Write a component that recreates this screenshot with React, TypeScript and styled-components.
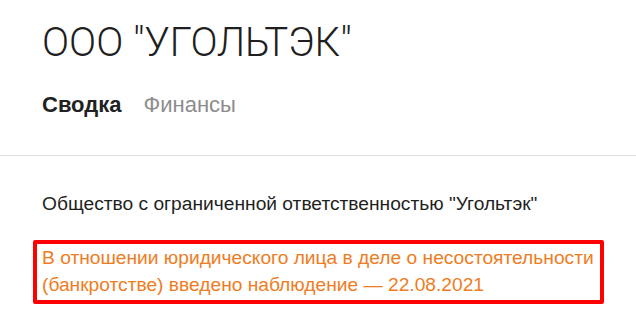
import styled, { createGlobalStyle } from 'styled-components';

const GlobalStyle = createGlobalStyle`
  html, body {
    margin: 0;
    padding: 0;
    background: #ffffff;
  }
  body {
    font-family: 'Liberation Sans', Arial, sans-serif;
    color: #222222;
  }
`;

const Page = styled.div`
  width: 636px;
  height: 319px;
  overflow: hidden;
  background: #ffffff;
`;

const Header = styled.header`
  padding: 19px 0 0 42px;
`;

const Title = styled.h1`
  margin: 0;
  font-family: 'Roboto', 'Liberation Sans', sans-serif;
  font-weight: 300;
  font-size: 40px;
  line-height: 48px;
  color: #1f1f1f;
`;

const Tabs = styled.nav`
  display: flex;
  gap: 22px;
  margin-top: 24px;
  padding-bottom: 37px;
  border-bottom: 1px solid #dedede;
  margin-left: -42px;
  padding-left: 42px;
`;

const Tab = styled.span<{ $active?: boolean }>`
  font-size: 22px;
  line-height: 27px;
  font-weight: ${(p) => (p.$active ? 700 : 400)};
  color: ${(p) => (p.$active ? '#222222' : '#8c8c8c')};
`;

const Content = styled.section`
  padding: 34px 0 0 33px;
`;

const FullName = styled.p`
  margin: 0 0 0 9px;
  font-size: 19.2px;
  line-height: 27px;
  color: #1f1f1f;
`;

const Warning = styled.div`
  margin-top: 23px;
  width: 556px;
  padding: 0 2px 2px 5px;
  border: 4px solid #ff0000;
  border-radius: 2px;
  font-size: 19.2px;
  line-height: 27px;
  color: #f07c22;
`;

export default function App() {
  return (
    <Page>
      <GlobalStyle />
      <Header>
        <Title>ООО "УГОЛЬТЭК"</Title>
        <Tabs>
          <Tab $active>Сводка</Tab>
          <Tab>Финансы</Tab>
        </Tabs>
      </Header>
      <Content>
        <FullName>Общество с ограниченной ответственностью "Угольтэк"</FullName>
        <Warning>
          В отношении юридического лица в деле о несостоятельности (банкротстве) введено наблюдение — 22.08.2021
        </Warning>
      </Content>
    </Page>
  );
}
